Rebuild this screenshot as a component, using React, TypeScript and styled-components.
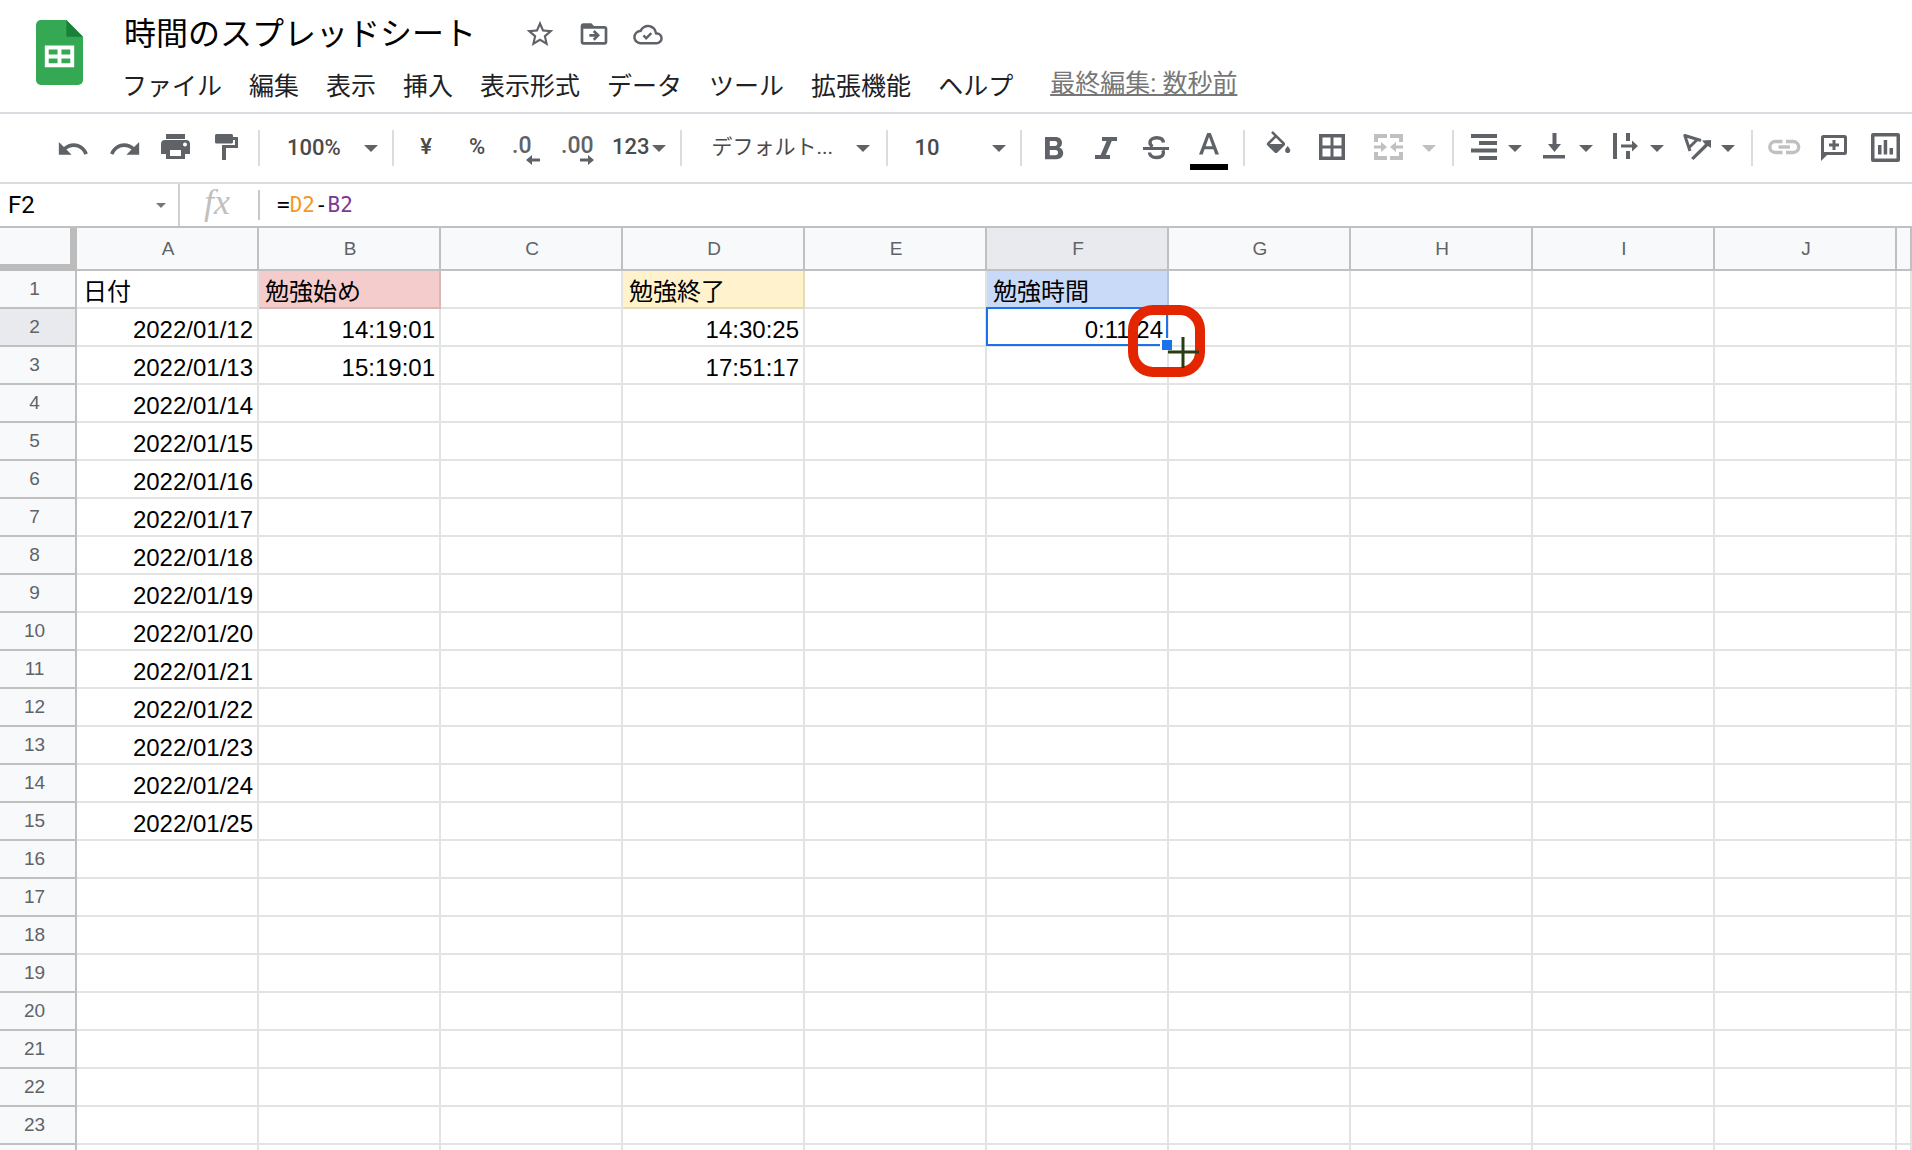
import React from "react";
import styled, { createGlobalStyle, css } from "styled-components";

const UI = `Roboto, "Noto Sans CJK JP", sans-serif`;
const CELL = `"Liberation Sans", "Noto Sans CJK JP", sans-serif`;
const MONO = `"DejaVu Sans Mono", monospace`;
const ICON = "#5f6368";
const RULE = "#d9dde1";

const GlobalStyle = createGlobalStyle`
  *, *::before, *::after { box-sizing: border-box; }
  body { margin: 0; background: #fff; font-family: ${UI}; }
  button, input, select { font: inherit; color: inherit; }
`;

const Page = styled.div`
  display: flex;
  flex-direction: column;
  height: 100vh;
  overflow: hidden;
`;

const Header = styled.header`
  display: flex;
  flex-shrink: 0;
  gap: 39px;
  height: 114px;
  padding: 20px 0 0 36px;
  border-bottom: 2px solid ${RULE};
`;

const Logo = styled.svg`
  flex-shrink: 0;
  width: 47px;
  height: 65px;
`;

const HeaderBody = styled.div`
  display: flex;
  flex-direction: column;
  gap: 15px;
`;

const TitleRow = styled.div`
  display: flex;
  align-items: center;
  gap: 22px;
  height: 28px;
`;

const TitleInput = styled.input`
  width: 380px;
  height: 44px;
  padding: 0 2px;
  border: 0;
  background: none;
  color: #000;
  font-size: 32px;
  line-height: 44px;
`;

const TitleButton = styled.button`
  display: flex;
  width: 32px;
  height: 32px;
  padding: 0;
  border: 0;
  background: none;
  color: ${ICON};
`;

const MenuBar = styled.nav`
  display: flex;
  align-items: center;
  gap: 27px;
  height: 48px;
`;

const MenuButton = styled.button`
  padding: 0;
  border: 0;
  background: none;
  color: #202124;
  font-size: 25px;
  line-height: 36px;
  white-space: nowrap;
`;

const LastEdit = styled.a`
  margin-left: 10px;
  padding-bottom: 6px;
  color: #777;
  font-size: 25px;
  line-height: 36px;
  white-space: nowrap;
`;

const Toolbar = styled.div`
  display: flex;
  flex-shrink: 0;
  align-items: center;
  height: 70px;
  padding-left: 41px;
  border-bottom: 2px solid ${RULE};
  color: ${ICON};
`;

const Group = styled.div<{ $gap?: number; $pad?: number }>`
  display: flex;
  flex-shrink: 0;
  align-items: center;
  gap: ${(p) => p.$gap ?? 15}px;
  padding: 0 ${(p) => p.$pad ?? 14}px;
`;

const Divider = styled.span`
  flex-shrink: 0;
  width: 2px;
  height: 36px;
  background: #dadce0;
`;

const ToolButton = styled.button<{ $gap?: number; $off?: boolean }>`
  display: flex;
  align-items: center;
  justify-content: center;
  gap: ${(p) => p.$gap ?? 2}px;
  min-width: 36px;
  height: 36px;
  padding: 0;
  border: 0;
  background: none;
  color: ${(p) => (p.$off ? "#c0c0c0" : ICON)};
`;

const ToolText = styled.span`
  padding-bottom: 2px;
  color: #4a4a4a;
  font-size: 22px;
  font-weight: 500;
  line-height: 34px;
`;

const Glyph = styled.svg`
  display: block;
  flex-shrink: 0;
  overflow: visible;
`;

const Picker = styled.label<{ $width: number; $left: number; $right: number }>`
  display: flex;
  flex-shrink: 0;
  align-items: center;
  width: ${(p) => p.$width}px;
  padding: 0 ${(p) => p.$right}px 0 ${(p) => p.$left}px;
`;

const PickerSelect = styled.select<{ $light?: boolean }>`
  flex: 1;
  min-width: 0;
  height: 36px;
  padding: 0 0 2px;
  border: 0;
  background: none;
  appearance: none;
  color: #4a4a4a;
  font-size: ${(p) => (p.$light ? 21 : 22)}px;
  font-weight: ${(p) => (p.$light ? 400 : 500)};
`;

const FormulaBar = styled.div`
  display: flex;
  flex-shrink: 0;
  align-items: center;
  height: 44px;
  border-bottom: 2px solid #c0c0c0;
`;

const NameBox = styled.label`
  display: flex;
  align-items: center;
  width: 180px;
  height: 42px;
  padding: 0 12px 0 8px;
  border-right: 2px solid #d0d0d0;
  color: #777;
`;

const NameInput = styled.input`
  flex: 1;
  min-width: 0;
  padding: 0;
  border: 0;
  background: none;
  color: #000;
  font-size: 24px;
  line-height: 30px;
`;

const FxMark = styled.span`
  width: 80px;
  height: 30px;
  padding-right: 4px;
  border-right: 2px solid #c8c8c8;
  color: #c0c0c0;
  font-family: "Liberation Serif", serif;
  font-size: 36px;
  font-style: italic;
  line-height: 24px;
  text-align: center;
`;

const Formula = styled.div`
  flex: 1;
  padding-left: 17px;
  color: #000;
  font-family: ${MONO};
  font-size: 21px;
  line-height: 30px;
  outline: none;
`;

const CellRef = styled.span<{ $color: string }>`
  color: ${(p) => p.$color};
`;

const GridArea = styled.main`
  flex: 1;
  min-height: 0;
  overflow: hidden;
`;

const Sheet = styled.table`
  width: 100%;
  border-spacing: 0;
  border-collapse: separate;
  table-layout: fixed;
`;

const HeadCol = styled.col`
  width: 77px;
`;

const DataCol = styled.col`
  width: 182px;
`;

const Corner = styled.td`
  height: 43px;
  padding: 0;
  border: solid #bcbcbc;
  border-width: 0 7px 7px 0;
  background: #f8f9fa;
`;

const headCell = css<{ $active?: boolean }>`
  border: solid #c0c0c0;
  border-width: 0 2px 2px 0;
  background: ${(p) => (p.$active ? "#e8eaed" : "#f8f9fa")};
  color: #5f6368;
  font-family: ${CELL};
  font-size: 19px;
  font-weight: 400;
  line-height: 24px;
`;

const ColHead = styled.th<{ $active?: boolean }>`
  ${headCell}
  height: 43px;
  padding: 0 0 0 2px;
`;

const RowHead = styled.th<{ $active?: boolean }>`
  ${headCell}
  height: 38px;
  padding: 0 6px 0 0;
`;

const Cell = styled.td<{ $fill?: string; $edge?: string; $right?: boolean }>`
  position: relative;
  height: 38px;
  padding: 6px 4px 0 6px;
  border: solid ${(p) => p.$edge ?? "#e2e3e3"};
  border-width: 0 2px 2px 0;
  background: ${(p) => p.$fill ?? "#fff"};
  color: #000;
  font-family: ${CELL};
  font-size: 24px;
  line-height: 30px;
  text-align: ${(p) => (p.$right ? "right" : "left")};
  vertical-align: top;
  white-space: nowrap;
`;

const Selection = styled.span`
  position: absolute;
  inset: -2px -1px -1px -1px;
  z-index: 1;
  border: 2px solid #1a73e8;
  pointer-events: none;
`;

const FillHandle = styled.span`
  position: absolute;
  right: -5px;
  bottom: -5px;
  z-index: 1;
  width: 12px;
  height: 12px;
  border: solid #fff;
  border-width: 2px 0 0 2px;
  background: #1a73e8;
`;

const Marker = styled.svg`
  position: absolute;
  top: -4px;
  left: 141px;
  z-index: 2;
  width: 78px;
  height: 72px;
  pointer-events: none;
`;

const Caret = ({ size = 14 }: { size?: number }) => (
  <Glyph width={size} height={size / 2} viewBox="0 0 14 7" fill="currentColor" aria-hidden="true">
    <path d="M0 0h14L7 7z" />
  </Glyph>
);

const Icon = ({ children, box = 36 }: { children: React.ReactNode; box?: number }) => (
  <Glyph width={box} height={36} viewBox={`0 0 ${box} 36`} fill="currentColor" aria-hidden="true">
    {children}
  </Glyph>
);

const UNDO =
  "M12.5 8c-2.65 0-5.05.99-6.9 2.6L2 7v9h9l-3.62-3.62c1.39-1.16 3.16-1.88 5.12-1.88 3.54 0 6.55 2.31 7.6 5.5l2.37-.78C21.08 11.03 17.15 8 12.5 8z";

const menus = ["ファイル", "編集", "表示", "挿入", "表示形式", "データ", "ツール", "拡張機能", "ヘルプ"];
const columns = ["A", "B", "C", "D", "E", "F", "G", "H", "I", "J"];
const rowCount = 23;

type CellData = { text: string; fill?: string; edge?: string; right?: boolean };

const cells: Record<string, CellData> = {
  A1: { text: "日付" },
  B1: { text: "勉強始め", fill: "#f4cccc", edge: "#dbb7b7" },
  D1: { text: "勉強終了", fill: "#fff2cc", edge: "#e5d9b7" },
  F1: { text: "勉強時間", fill: "#c9daf8", edge: "#b4c4df" },
  B2: { text: "14:19:01", right: true },
  B3: { text: "15:19:01", right: true },
  D2: { text: "14:30:25", right: true },
  D3: { text: "17:51:17", right: true },
  F2: { text: "0:11:24", right: true },
};
for (let day = 12; day <= 25; day++) {
  cells[`A${day - 10}`] = { text: `2022/01/${day}`, right: true };
}

export default function App() {
  return (
    <Page>
      <GlobalStyle />
      <Header>
        <Logo viewBox="0 0 48 66" preserveAspectRatio="none" aria-hidden="true">
          <path fill="#34a853" d="M5 0h26l17 17v44a5 5 0 0 1-5 5H5a5 5 0 0 1-5-5V5a5 5 0 0 1 5-5z" />
          <path fill="#188038" d="M31 0l17 17H31z" />
          <path fill="#fff" fillRule="evenodd" d="M9 26h30v22H9zM13 30v5h9v-5zm13 0v5h9v-5zM13 39v5h9v-5zm13 0v5h9v-5z" />
        </Logo>
        <HeaderBody>
          <TitleRow>
            <TitleInput aria-label="ドキュメント名" defaultValue="時間のスプレッドシート" />
            <TitleButton aria-label="スター">
              <Glyph width={32} height={32} viewBox="0 0 24 24" fill="currentColor">
                <path d="M22 9.24l-7.19-.62L12 2 9.19 8.63 2 9.24l5.46 4.73L5.82 21 12 17.27 18.18 21l-1.63-7.03L22 9.24zM12 15.4l-3.76 2.27 1-4.28-3.32-2.88 4.38-.38L12 6.1l1.71 4.04 4.38.38-3.32 2.88 1 4.28L12 15.4z" />
              </Glyph>
            </TitleButton>
            <TitleButton aria-label="移動">
              <Glyph width={32} height={32} viewBox="0 0 24 24" fill="currentColor">
                <path fillRule="evenodd" d="M20 6h-8l-2-2H4c-1.1 0-2 .9-2 2v12c0 1.1.9 2 2 2h16c1.1 0 2-.9 2-2V8c0-1.1-.9-2-2-2zm0 12H4V8h16z" />
                <path d="M12.500 17l4-4-4-4-1.410 1.410L12.670 12H8.500v2h4.170l-1.580 1.590z" />
              </Glyph>
            </TitleButton>
            <TitleButton aria-label="保存状態">
              <Glyph width={32} height={32} viewBox="-1 -1.5 26 26" fill="currentColor">
                <path d="M19.35 10.04A7.49 7.49 0 0 0 12 4C9.11 4 6.6 5.64 5.35 8.04A5.994 5.994 0 0 0 0 14c0 3.31 2.69 6 6 6h13c2.76 0 5-2.24 5-5 0-2.64-2.05-4.78-4.65-4.96zM19 18H6c-2.21 0-4-1.79-4-4 0-2.05 1.53-3.76 3.56-3.97l1.07-.11.5-.95A5.469 5.469 0 0 1 12 6c2.62 0 4.88 1.86 5.39 4.43l.3 1.5 1.53.11A2.98 2.98 0 0 1 22 15c0 1.65-1.35 3-3 3zm-8.500-4.500l-1.500-1.500L7.600 13.400 10.500 16.300l4.900-4.900-1.410-1.410z" />
              </Glyph>
            </TitleButton>
          </TitleRow>
          <MenuBar>
            {menus.map((m) => (
              <MenuButton key={m}>{m}</MenuButton>
            ))}
            <LastEdit href="#history">最終編集: 数秒前</LastEdit>
          </MenuBar>
        </HeaderBody>
      </Header>

      <Toolbar role="toolbar">
        <Group>
          <ToolButton aria-label="元に戻す">
            <Icon><path transform="translate(1 2) scale(1.417)" d={UNDO} /></Icon>
          </ToolButton>
          <ToolButton aria-label="やり直し">
            <Icon><path transform="translate(36 2) scale(-1.417 1.417)" d={UNDO} /></Icon>
          </ToolButton>
          <ToolButton aria-label="印刷">
            <Icon>
              <path fillRule="evenodd" d="M9 4h19v5H9zM8 10h21a4 4 0 0 1 4 4v10h-5v5H9v-5H4V14a4 4 0 0 1 4-4zm5 10v6h11v-6zM28 12.500a2 2 0 1 0 .01 0z" />
            </Icon>
          </ToolButton>
          <ToolButton aria-label="書式を貼り付け">
            <Icon>
              <path d="M8.500 4h15A1.500 1.500 0 0 1 25 5.500V7h5v11H18v12h-4V15h13V10h-2v2a1.500 1.500 0 0 1-1.500 1.500h-15A1.500 1.500 0 0 1 7 12V5.500A1.500 1.500 0 0 1 8.500 4z" />
            </Icon>
          </ToolButton>
        </Group>
        <Divider />
        <Picker $width={132} $left={27} $right={14}>
          <PickerSelect aria-label="ズーム" defaultValue="100%">
            <option>100%</option>
          </PickerSelect>
          <Caret />
        </Picker>
        <Divider />
        <Group>
          <ToolButton><ToolText>¥</ToolText></ToolButton>
          <ToolButton><ToolText>%</ToolText></ToolButton>
          <ToolButton aria-label="小数点以下の桁数を減らす">
            <Icon>
              <text x="2" y="23" fontSize="23" fontWeight="500">.0</text>
              <path d="M16 30l6-5v3.500h8v3h-8V35z" />
            </Icon>
          </ToolButton>
          <ToolButton aria-label="小数点以下の桁数を増やす">
            <Icon>
              <text x="0" y="23" fontSize="23" fontWeight="500">.00</text>
              <path d="M33 30l-6-5v3.500h-8v3h8V35z" />
            </Icon>
          </ToolButton>
          <ToolButton>
            <ToolText>123</ToolText>
            <Caret />
          </ToolButton>
        </Group>
        <Divider />
        <Picker $width={204} $left={30} $right={16}>
          <PickerSelect $light aria-label="フォント" defaultValue="デフォルト...">
            <option>デフォルト...</option>
          </PickerSelect>
          <Caret />
        </Picker>
        <Divider />
        <Picker $width={132} $left={27} $right={14}>
          <PickerSelect aria-label="フォント サイズ" defaultValue="10">
            <option>10</option>
          </PickerSelect>
          <Caret />
        </Picker>
        <Divider />
        <Group $pad={15}>
          <ToolButton aria-label="太字">
            <Icon>
              <path fillRule="evenodd" d="M8 7h10.500c4 0 6.500 2.300 6.500 5.800 0 2.200-1 3.900-2.700 4.800 2.400.9 3.900 2.900 3.900 5.500 0 3.800-2.800 6.100-7 6.100H8zM12.800 11v5h5c1.600 0 2.600-1 2.600-2.500S19.400 11 17.800 11zm0 9v5.200h5.600c1.700 0 2.700-1 2.700-2.600s-1-2.600-2.700-2.600z" />
            </Icon>
          </ToolButton>
          <ToolButton aria-label="斜体">
            <Icon><path d="M14 7h15v4h-5.200l-6 14H22v4H7v-4h5.600l6-14H14z" /></Icon>
          </ToolButton>
          <ToolButton aria-label="取り消し線">
            <Icon>
              <path d="M4 17h26v3H4z" />
              <path fill="none" stroke="currentColor" strokeWidth="3.400" d="M24.500 12.500c-.3-3-2.900-4.700-6.800-4.700-4 0-6.700 1.800-6.700 4.600 0 1.900 1 3.100 2.700 4M10.500 22.500c.2 3.200 3 5 7 5s6.900-1.700 6.900-4.700c0-1-.2-1.800-.7-2.500" />
            </Icon>
          </ToolButton>
          <ToolButton aria-label="テキストの色">
            <Icon box={38}>
              <path fillRule="evenodd" d="M17.200 3h3.600l8.200 21.500h-3.700l-1.900-5.200h-8.800l-1.900 5.200H9zM19 7l-3.300 9.200h6.600z" />
              <path fill="#000" d="M0 34h38v6H0z" />
            </Icon>
          </ToolButton>
        </Group>
        <Divider />
        <Group $gap={18} $pad={16}>
          <ToolButton aria-label="塗りつぶしの色">
            <Icon>
              <path transform="translate(2 1) scale(1.300)" d="M16.560 8.940L7.620 0 6.210 1.410l2.380 2.380-5.150 5.150a1.490 1.490 0 0 0 0 2.120l5.500 5.500c.29.290.68.440 1.060.440s.77-.15 1.060-.440l5.500-5.500c.590-.580.590-1.530 0-2.120zM5.210 10L10 5.210 14.790 10H5.210zM19 11.500s-2 2.170-2 3.500c0 1.100.9 2 2 2s2-.9 2-2c0-1.330-2-3.500-2-3.500z" />
            </Icon>
          </ToolButton>
          <ToolButton aria-label="枠線">
            <Icon><path fillRule="evenodd" d="M4 4h26v26H4zM7.500 7.500v8h8v-8zm11 0v8h8v-8zM7.500 18.500v8h8v-8zm11 0v8h8v-8z" /></Icon>
          </ToolButton>
          <ToolButton aria-label="セルを結合" $gap={17} $off>
            <Icon>
              <path d="M5 4h13v4H9v4H5zM21 4h13v8h-4V8h-9zM5 22h4v4h9v4H5zM30 22h4v8H21v-4h9zM5 15.500h7V12l6 5-6 5v-3.500H5zM34 15.500h-7V12l-6 5 6 5v-3.500h7z" />
            </Icon>
            <Caret />
          </ToolButton>
        </Group>
        <Divider />
        <Group $gap={19} $pad={16}>
          <ToolButton aria-label="水平方向の配置">
            <Icon><path d="M1 4h26v4H1zM9 11h18v4H9zM1 18.500h26v4H1zM9 26h18v4H9z" /></Icon>
            <Caret />
          </ToolButton>
          <ToolButton aria-label="垂直方向の配置">
            <Icon><path d="M11.500 3h4v11h4.500l-6.500 8-6.500-8h4.500zM2 25h22v3.500H2z" /></Icon>
            <Caret />
          </ToolButton>
          <ToolButton aria-label="テキストの折り返し">
            <Icon><path d="M1 3h4v26H1zM14 3h4v8h-4zM14 21h4v8h-4zM9 14.500h11V10.500l6 5.500-6 5.500v-4H9z" /></Icon>
            <Caret />
          </ToolButton>
          <ToolButton aria-label="テキストの回転">
            <Icon>
              <path fill="none" stroke="currentColor" strokeWidth="3" strokeLinejoin="round" d="M7 21L1.800 5.500 18 10.500M5.600 18l8.800-8.500" />
              <path d="M8 28l14-14-3-3.500 9-.500v8l-3-2-14.500 14z" />
            </Icon>
            <Caret />
          </ToolButton>
        </Group>
        <Divider />
        <Group $pad={15}>
          <ToolButton aria-label="リンクを挿入" $off>
            <Icon>
              <path fill="none" stroke="currentColor" strokeWidth="3.400" d="M14.500 11.500H7.300a5.300 5.300 0 0 0 0 11h7.200M18 11.500h7.200a5.300 5.300 0 0 1 0 11H18" />
              <path d="M10.500 15.300h11.500v3.400H10.500z" />
            </Icon>
          </ToolButton>
          <ToolButton aria-label="コメントを挿入">
            <Icon>
              <path fillRule="evenodd" d="M4.500 5h21A2.500 2.500 0 0 1 28 7.500v15a2.500 2.500 0 0 1-2.500 2.500H8l-6 6V7.500A2.500 2.500 0 0 1 4.500 5zm.5 3v14h20V8z" />
              <path d="M13.500 10h3v3.500H20v3h-3.500V20h-3v-3.500H10v-3h3.500z" />
            </Icon>
          </ToolButton>
          <ToolButton aria-label="グラフを挿入">
            <Icon>
              <path fillRule="evenodd" d="M3 3h25a2 2 0 0 1 2 2v25a2 2 0 0 1-2 2H3a2 2 0 0 1-2-2V5a2 2 0 0 1 2-2zm1.500 3.500v22h22v-22z" />
              <path d="M8 15h3.500v9.500H8zM13.700 10h3.500v14.500h-3.500zM19.500 18H23v6.500h-3.500z" />
            </Icon>
          </ToolButton>
        </Group>
      </Toolbar>

      <FormulaBar>
        <NameBox>
          <NameInput aria-label="名前ボックス" defaultValue="F2" />
          <Caret size={10} />
        </NameBox>
        <FxMark>fx</FxMark>
        <Formula role="textbox" aria-label="数式">
          =<CellRef $color="#f7981d">D2</CellRef>-<CellRef $color="#7e3794">B2</CellRef>
        </Formula>
      </FormulaBar>

      <GridArea>
        <Sheet>
          <colgroup>
            <HeadCol />
            {columns.map((c) => (
              <DataCol key={c} />
            ))}
            <col />
          </colgroup>
          <thead>
            <tr>
              <Corner />
              {columns.map((c) => (
                <ColHead key={c} scope="col" $active={c === "F"}>
                  {c}
                </ColHead>
              ))}
              <ColHead as="td" />
            </tr>
          </thead>
          <tbody>
            {Array.from({ length: rowCount }, (_, i) => i + 1).map((row) => (
              <tr key={row}>
                <RowHead scope="row" $active={row === 2}>
                  {row}
                </RowHead>
                {columns.map((c) => {
                  const key = `${c}${row}`;
                  const data = cells[key];
                  return (
                    <Cell key={c} $fill={data?.fill} $edge={data?.edge} $right={data?.right}>
                      {data?.text}
                      {key === "F2" && (
                        <>
                          <Selection />
                          <FillHandle />
                          <Marker viewBox="0 0 78 72" aria-hidden="true">
                            <rect x="5" y="5" width="67" height="62" rx="20" fill="none" stroke="#e42600" strokeWidth="10" />
                            <path d="M40 47h31M55 32v31" stroke="#2a3d12" strokeWidth="3" />
                          </Marker>
                        </>
                      )}
                    </Cell>
                  );
                })}
                <Cell />
              </tr>
            ))}
            <tr>
              <RowHead as="td" />
              {columns.map((c) => (
                <Cell key={c} />
              ))}
              <Cell />
            </tr>
          </tbody>
        </Sheet>
      </GridArea>
    </Page>
  );
}
